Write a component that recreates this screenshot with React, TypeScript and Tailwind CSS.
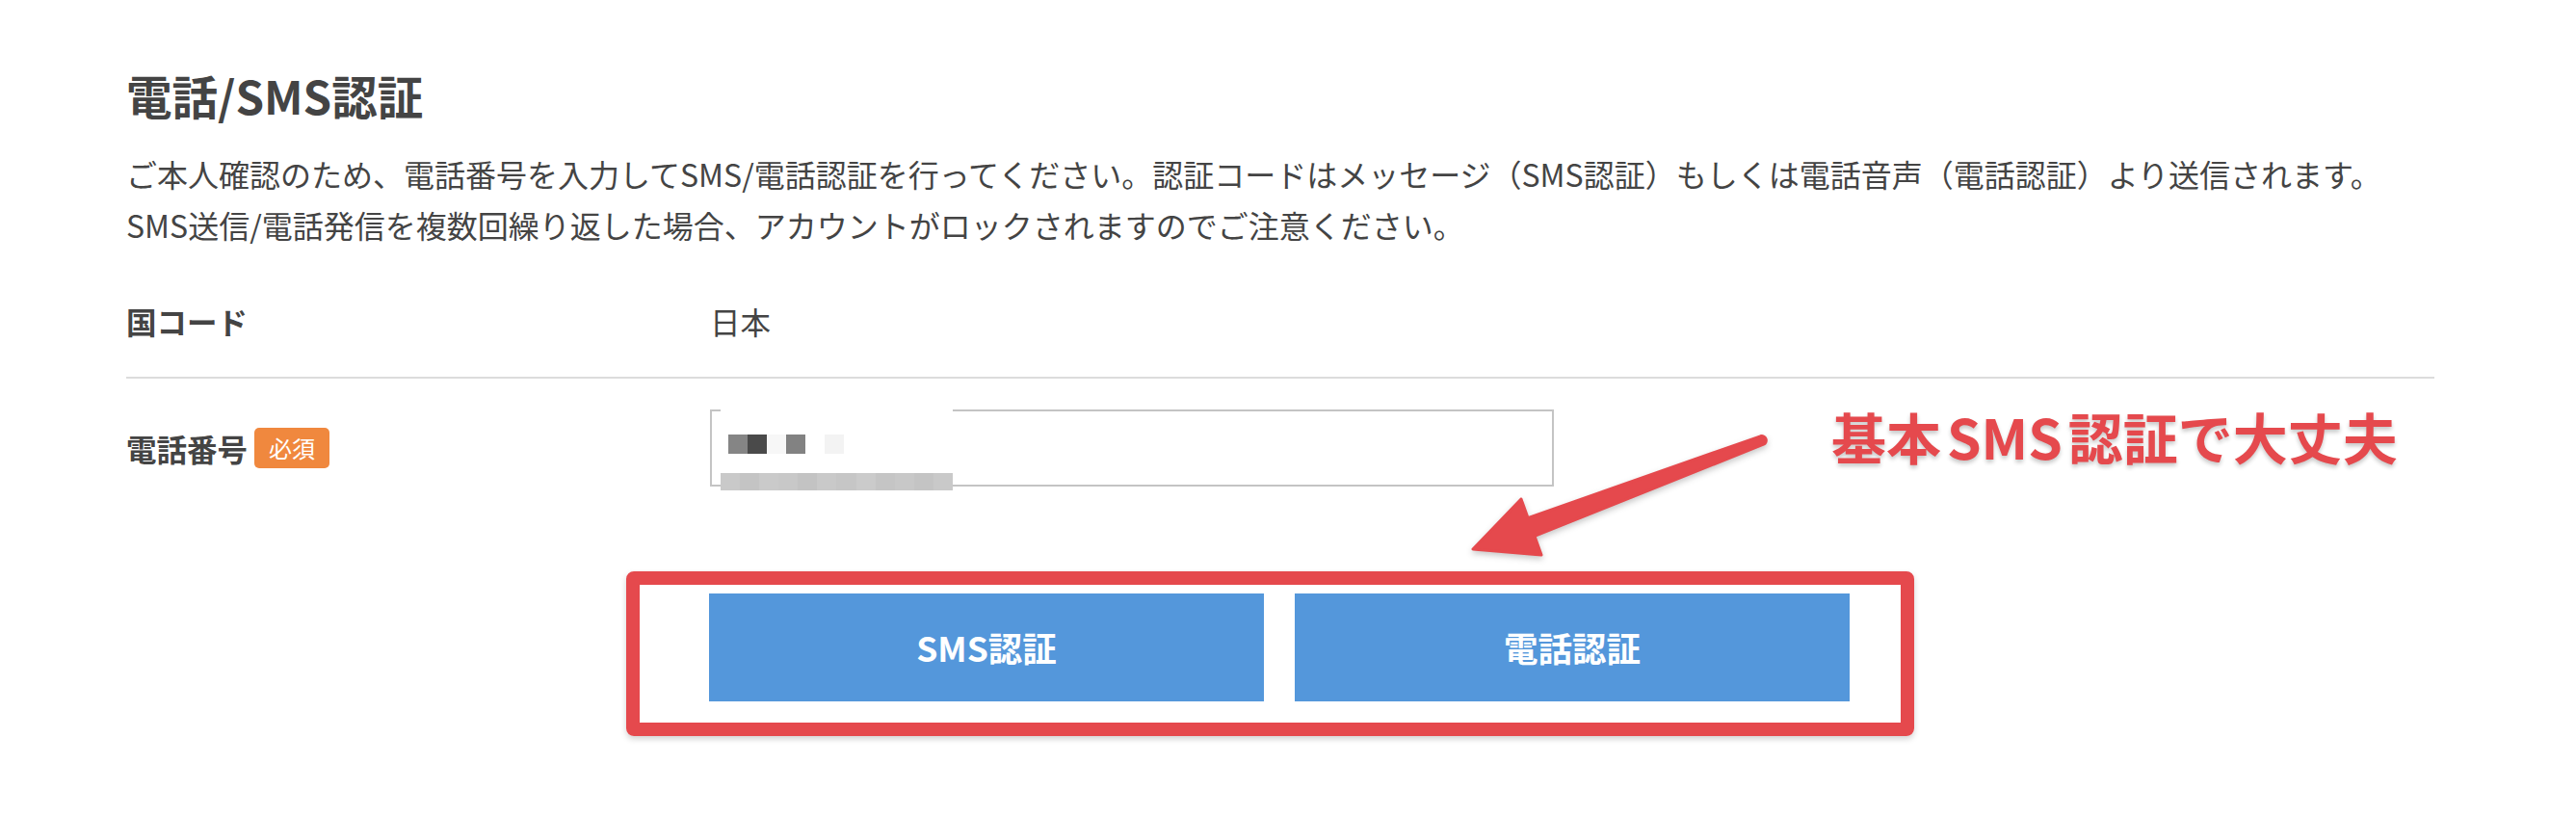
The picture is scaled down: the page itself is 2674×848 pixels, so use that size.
import { useState } from 'react'

const blocks = ['#858585', '#4a4a4a', '#f7f7f7', '#828282', '#ffffff', '#f3f3f3']
const strip = ['#c9c9c9', '#c4c4c4', '#cacaca', '#c8c8c8', '#c3c3c3', '#c9c9c9', '#c6c6c6', '#cbcbcb', '#c5c5c5', '#c8c8c8', '#c4c4c4', '#c9c9c9']

function Mosaic () {
    return (
        <div className="absolute left-[9px] top-[-2px] w-[241px] h-[84px] bg-white">
            <div className="flex mt-[26px] ml-[8px] h-[20px]">
                {blocks.map((c, i) => (
                    <div key={i + '_blk'} className="w-[20px] h-[20px]" style={{ backgroundColor: c }} />
                ))}
            </div>
            <div className="flex mt-[20px] h-[18px]">
                {strip.map((c, i) => (
                    <div key={i + '_strip'} className="flex-1 h-[18px]" style={{ backgroundColor: c }} />
                ))}
            </div>
        </div>
    )
}

function Arrow () {
    return (
        <svg
            className="absolute left-[1500px] top-[430px] w-[360px] h-[170px] drop-shadow-[0_3px_3px_rgba(0,0,0,0.22)]"
            viewBox="1500 430 360 170"
        >
            <path
                d="M 1827.4 452.8 L 1586 537.6 L 1579 518 L 1529 570 L 1600 576 L 1593 556.4 L 1830.6 461.2 A 4.5 4.5 0 0 0 1827.4 452.8 Z"
                fill="#e5494d"
                stroke="#e5494d"
                strokeWidth="3"
                strokeLinejoin="round"
            />
        </svg>
    )
}

export default function App () {
    const [phone, setPhone] = useState('')

    return (
        <div className="relative w-[2674px] h-[848px] bg-white text-[#444] font-['Noto_Sans_CJK_JP','Noto_Sans',sans-serif] overflow-hidden">
            <div className="pl-[131px] pr-[147px] pt-[64px]">
                <h1 className="text-[47.5px] leading-[70px] font-bold">電話/SMS認証</h1>

                <p className="mt-[20px] text-[32px] leading-[53px] whitespace-nowrap">
                    ご本人確認のため、電話番号を入力してSMS/電話認証を行ってください。認証コードはメッセージ（SMS認証）もしくは電話音声（電話認証）より送信されます。
                    <br />
                    SMS送信/電話発信を複数回繰り返した場合、アカウントがロックされますのでご注意ください。
                </p>

                <div className="mt-[15px] flex items-center py-[35px] border-b-2 border-[#dcdcdc]">
                    <div className="w-[606px] text-[31.5px] leading-[46px] font-bold">国コード</div>
                    <div className="text-[31.5px] leading-[46px]">日本</div>
                </div>

                <div className="flex items-center py-[32px]">
                    <div className="w-[606px] flex items-center gap-[7px]">
                        <span className="text-[31.5px] leading-[46px] font-bold">電話番号</span>
                        <span className="h-[42px] px-[15px] flex items-center rounded-[5px] bg-[#f0883e] text-white text-[24px]">必須</span>
                    </div>
                    <div className="relative w-[876px] h-[80px] border-2 border-[#c4c4c4]">
                        <input
                            value={phone}
                            onChange={(e) => setPhone(e.target.value)}
                            className="w-full h-full px-[16px] text-[31px] outline-none bg-transparent"
                        />
                        <Mosaic />
                    </div>
                </div>

                <div className="mt-[79px] ml-[605px] flex gap-[32px]">
                    <button className="w-[576px] h-[112px] bg-[#5497db] text-white text-[35.5px] font-bold">SMS認証</button>
                    <button className="w-[576px] h-[112px] bg-[#5497db] text-white text-[35.5px] font-bold">電話認証</button>
                </div>
            </div>

            <div className="absolute left-[650px] top-[593px] w-[1337px] h-[171px] border-[14px] border-[#e5494d] rounded-[8px] shadow-[0_3px_6px_rgba(0,0,0,0.18)]" />

            <Arrow />

            <div className="absolute left-[1901px] top-[424px] text-[57px] leading-[57px] font-bold text-[#e5494d] whitespace-nowrap [text-shadow:0_3px_4px_rgba(0,0,0,0.22)]">
                基本<span className="mx-[6px]">SMS</span>認証で大丈夫
            </div>
        </div>
    )
}
